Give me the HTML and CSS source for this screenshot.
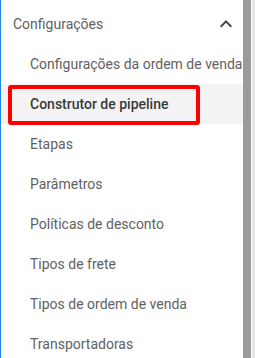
FILE: index.html
```html
<!DOCTYPE html>
<html lang="pt">
<head>
<meta charset="utf-8">
<link rel="stylesheet" href="styles.css">
</head>
<body>
<div class="frame">
  <div class="edge"></div>
  <nav class="menu">
    <div class="group-head">
      <span class="group-title">Configurações</span>
      <svg class="chev" width="24" height="24" viewBox="0 0 24 24"><path d="M7.41 15.41 12 10.83l4.59 4.58L18 14l-6-6-6 6z" fill="#444"/></svg>
    </div>
    <ul class="items">
      <li class="item">Configurações da ordem de venda</li>
      <li class="item active"><span class="mark"></span>Construtor de pipeline</li>
      <li class="item">Etapas</li>
      <li class="item">Parâmetros</li>
      <li class="item">Políticas de desconto</li>
      <li class="item">Tipos de frete</li>
      <li class="item">Tipos de ordem de venda</li>
      <li class="item">Transportadoras</li>
    </ul>
  </nav>
  <div class="scroll"></div>
  <div class="strip"></div>
</div>
</body>
</html>
```
FILE: styles.css
```css
html, body {
  margin: 0;
  padding: 0;
  background: #fff;
}
body {
  font-family: Roboto, "Liberation Sans", sans-serif;
  font-size: 14px;
  color: #616161;
}
.frame {
  display: flex;
  height: 358px;
  overflow: hidden;
}
.edge {
  width: 1px;
  background: #1e88e5;
  flex: none;
}
.menu {
  flex: 1;
  min-width: 0;
}
.scroll {
  width: 8px;
  background: #9b9b9b;
  flex: none;
}
.strip {
  width: 3px;
  background: #e3e3e3;
  flex: none;
  border-left: 1px solid #fff;
}
.group-head {
  height: 40px;
  padding-top: 4px;
  display: flex;
  align-items: center;
  justify-content: space-between;
  padding-left: 12px;
  padding-right: 5px;
}
.group-title {
  color: #616161;
}
.chev {
  display: block;
}
.items {
  list-style: none;
  margin: 0;
  padding: 0;
}
.item {
  height: 40px;
  line-height: 40px;
  padding-left: 29px;
  white-space: nowrap;
  color: #616161;
  position: relative;
}
.item.active {
  background: #f3f3f3;
  color: #3a3a3a;
  font-weight: 500;
}
.mark {
  position: absolute;
  left: 7px;
  top: 1px;
  width: 184px;
  height: 32px;
  border: 4px solid #ff0000;
  border-radius: 3px;
}
```
